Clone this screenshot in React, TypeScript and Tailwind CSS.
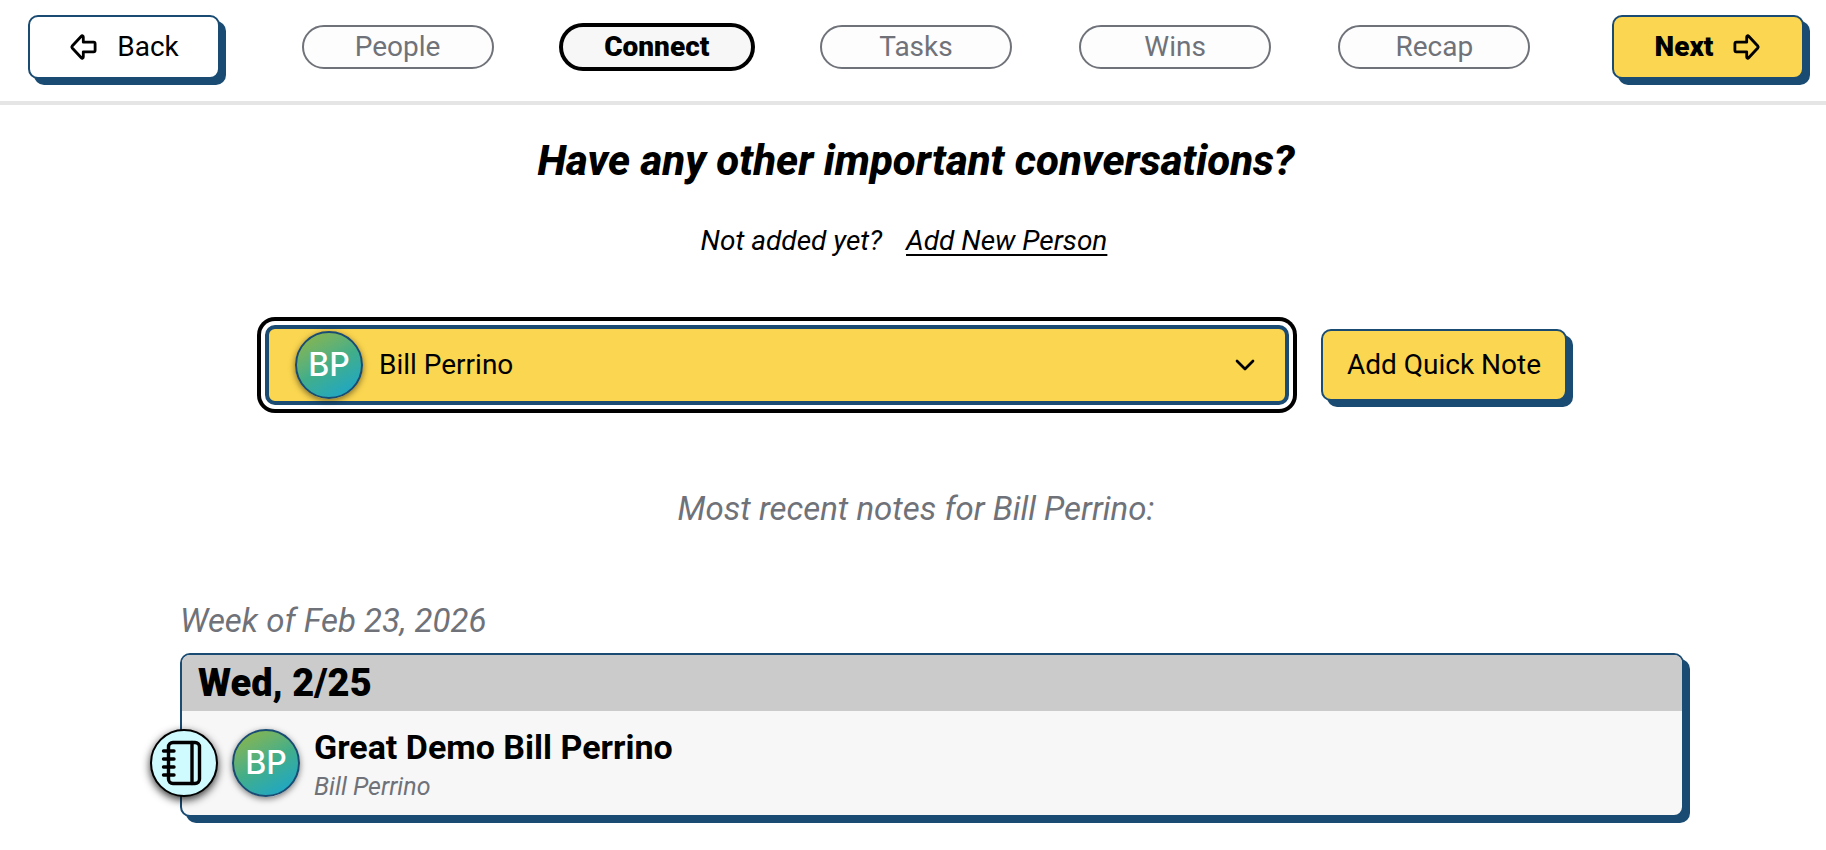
import React from 'react';
import { ChevronDown } from 'lucide-react';

const steps = ['People', 'Connect', 'Tasks', 'Wins', 'Recap'];
const activeStep = 'Connect';

const ArrowIcon: React.FC<{ className?: string }> = ({ className = '' }) => (
  <svg className={`size-7 shrink-0 ${className}`} viewBox="0 0 28 28" fill="none" stroke="currentColor" strokeWidth="2.8" strokeLinejoin="round" aria-hidden="true">
    <path d="M3.2 13 12.300 3.200c.8-.9 2-.4 2 .7v5.300h10.300c.9 0 1.500.6 1.500 1.500v6.600c0 .9-.6 1.500-1.500 1.500h-10.300v5.300c0 1.100-1.200 1.600-2 .7L3.200 15c-.6-.7-.6-1.300 0-2Z" />
  </svg>
);

const NotebookIcon: React.FC = () => (
  <svg className="size-12" viewBox="0 0 48 48" fill="none" stroke="currentColor" strokeWidth="3.4" strokeLinecap="round" aria-hidden="true">
    <rect x="8.5" y="3.5" width="31" height="41" rx="4.5" />
    <path d="M32 3.500V44.500M3.500 12H14M3.500 20H14M3.500 28H14M3.500 36H14" />
  </svg>
);

const Avatar: React.FC<{ initials: string }> = ({ initials }) => (
  <span className="flex size-[68px] shrink-0 items-center justify-center rounded-full border-2 border-[#194b73] bg-linear-150 from-[#8ab544] from-5% via-[#42ae88] to-[#18a5cb] to-95% font-['Inter',sans-serif] text-[32px] font-medium text-white shadow-[0_2px_6px_rgba(0,0,0,0.5)]">
    {initials}
  </span>
);

export default function App() {
  return (
    <div className="min-h-screen bg-white font-['Roboto',sans-serif] text-[28px] leading-10 text-black">
      <header className="flex items-center border-b-4 border-[#e5e5e5] pt-[15px] pr-[22px] pb-[22px] pl-7">
        <button className="flex h-16 w-48 items-center justify-center gap-5 rounded-[10px] border-2 border-[#194b73] bg-white shadow-[6px_6px_0_#194b73]">
          <ArrowIcon />
          Back
        </button>

        <nav className="mx-12 flex flex-1 items-center justify-around">
          {steps.map(step => (
            <button
              key={step}
              className={
                step === activeStep
                  ? 'flex h-11 w-48 items-center justify-center rounded-full border-2 border-black bg-[#f7f7f7] font-black ring-2 ring-black'
                  : 'flex h-11 w-48 items-center justify-center rounded-full border-2 border-[#6f7279] bg-[#fdfdfd] text-[#6f7279]'
              }
            >
              {step}
            </button>
          ))}
        </nav>

        <button className="flex h-16 w-48 items-center justify-center gap-5 rounded-[10px] border-2 border-[#194b73] bg-[#fbd650] font-black shadow-[6px_6px_0_#194b73]">
          Next
          <ArrowIcon className="rotate-180" />
        </button>
      </header>

      <main className="flex flex-col items-center pt-8 pb-7 pl-1.5">
        <h1 className="text-[42px] leading-12 font-extrabold italic">Have any other important conversations?</h1>

        <p className="mt-9 flex gap-6 pr-6 italic">
          Not added yet?
          <a href="#new-person" className="underline decoration-2 underline-offset-4">Add New Person</a>
        </p>

        <div className="mt-16 flex items-center gap-8">
          <div className="relative">
            <select
              aria-label="Person"
              className="h-20 w-[1024px] appearance-none rounded-[10px] border-4 border-[#194b73] bg-[#fbd650] pl-[110px] ring-4 ring-black ring-offset-4 outline-none"
            >
              <option>Bill Perrino</option>
            </select>
            <div className="pointer-events-none absolute inset-y-0 left-[30px] flex items-center">
              <Avatar initials="BP" />
            </div>
            <ChevronDown className="pointer-events-none absolute top-6 right-7 size-8" strokeWidth={2} aria-hidden="true" />
          </div>
          <button className="h-18 rounded-[10px] border-2 border-[#194b73] bg-[#fbd650] px-6 shadow-[6px_6px_0_#194b73]">
            Add Quick Note
          </button>
        </div>

        <h2 className="mt-21 text-[33px] text-[#6f7279] italic">Most recent notes for Bill Perrino:</h2>

        {/* Notes, grouped by week */}
        <section className="mt-18 w-full max-w-[1536px] pl-8">
          <h3 className="text-[33px] text-[#6f7279] italic">Week of Feb 23, 2026</h3>
          <article className="relative mt-3 rounded-[10px] border-2 border-[#194b73] bg-[#f7f7f7] shadow-[6px_6px_0_#194b73]">
            <h4 className="rounded-t-lg bg-[#cbcbcb] px-4 text-[38px] leading-14 font-black">Wed, 2/25</h4>
            <div className="flex items-center gap-3.5 py-3 pl-[50px]">
              <span className="absolute -left-8 flex size-[68px] items-center justify-center rounded-full border-2 border-black bg-[#cffafe] shadow-[0_3px_8px_rgba(0,0,0,0.8)]">
                <NotebookIcon />
              </span>
              <Avatar initials="BP" />
              <div>
                <p className="text-[34px] leading-12 font-bold">Great Demo Bill Perrino</p>
                <p className="text-[25px] leading-8 text-[#6f7279] italic">Bill Perrino</p>
              </div>
            </div>
          </article>
        </section>
      </main>
    </div>
  );
}
